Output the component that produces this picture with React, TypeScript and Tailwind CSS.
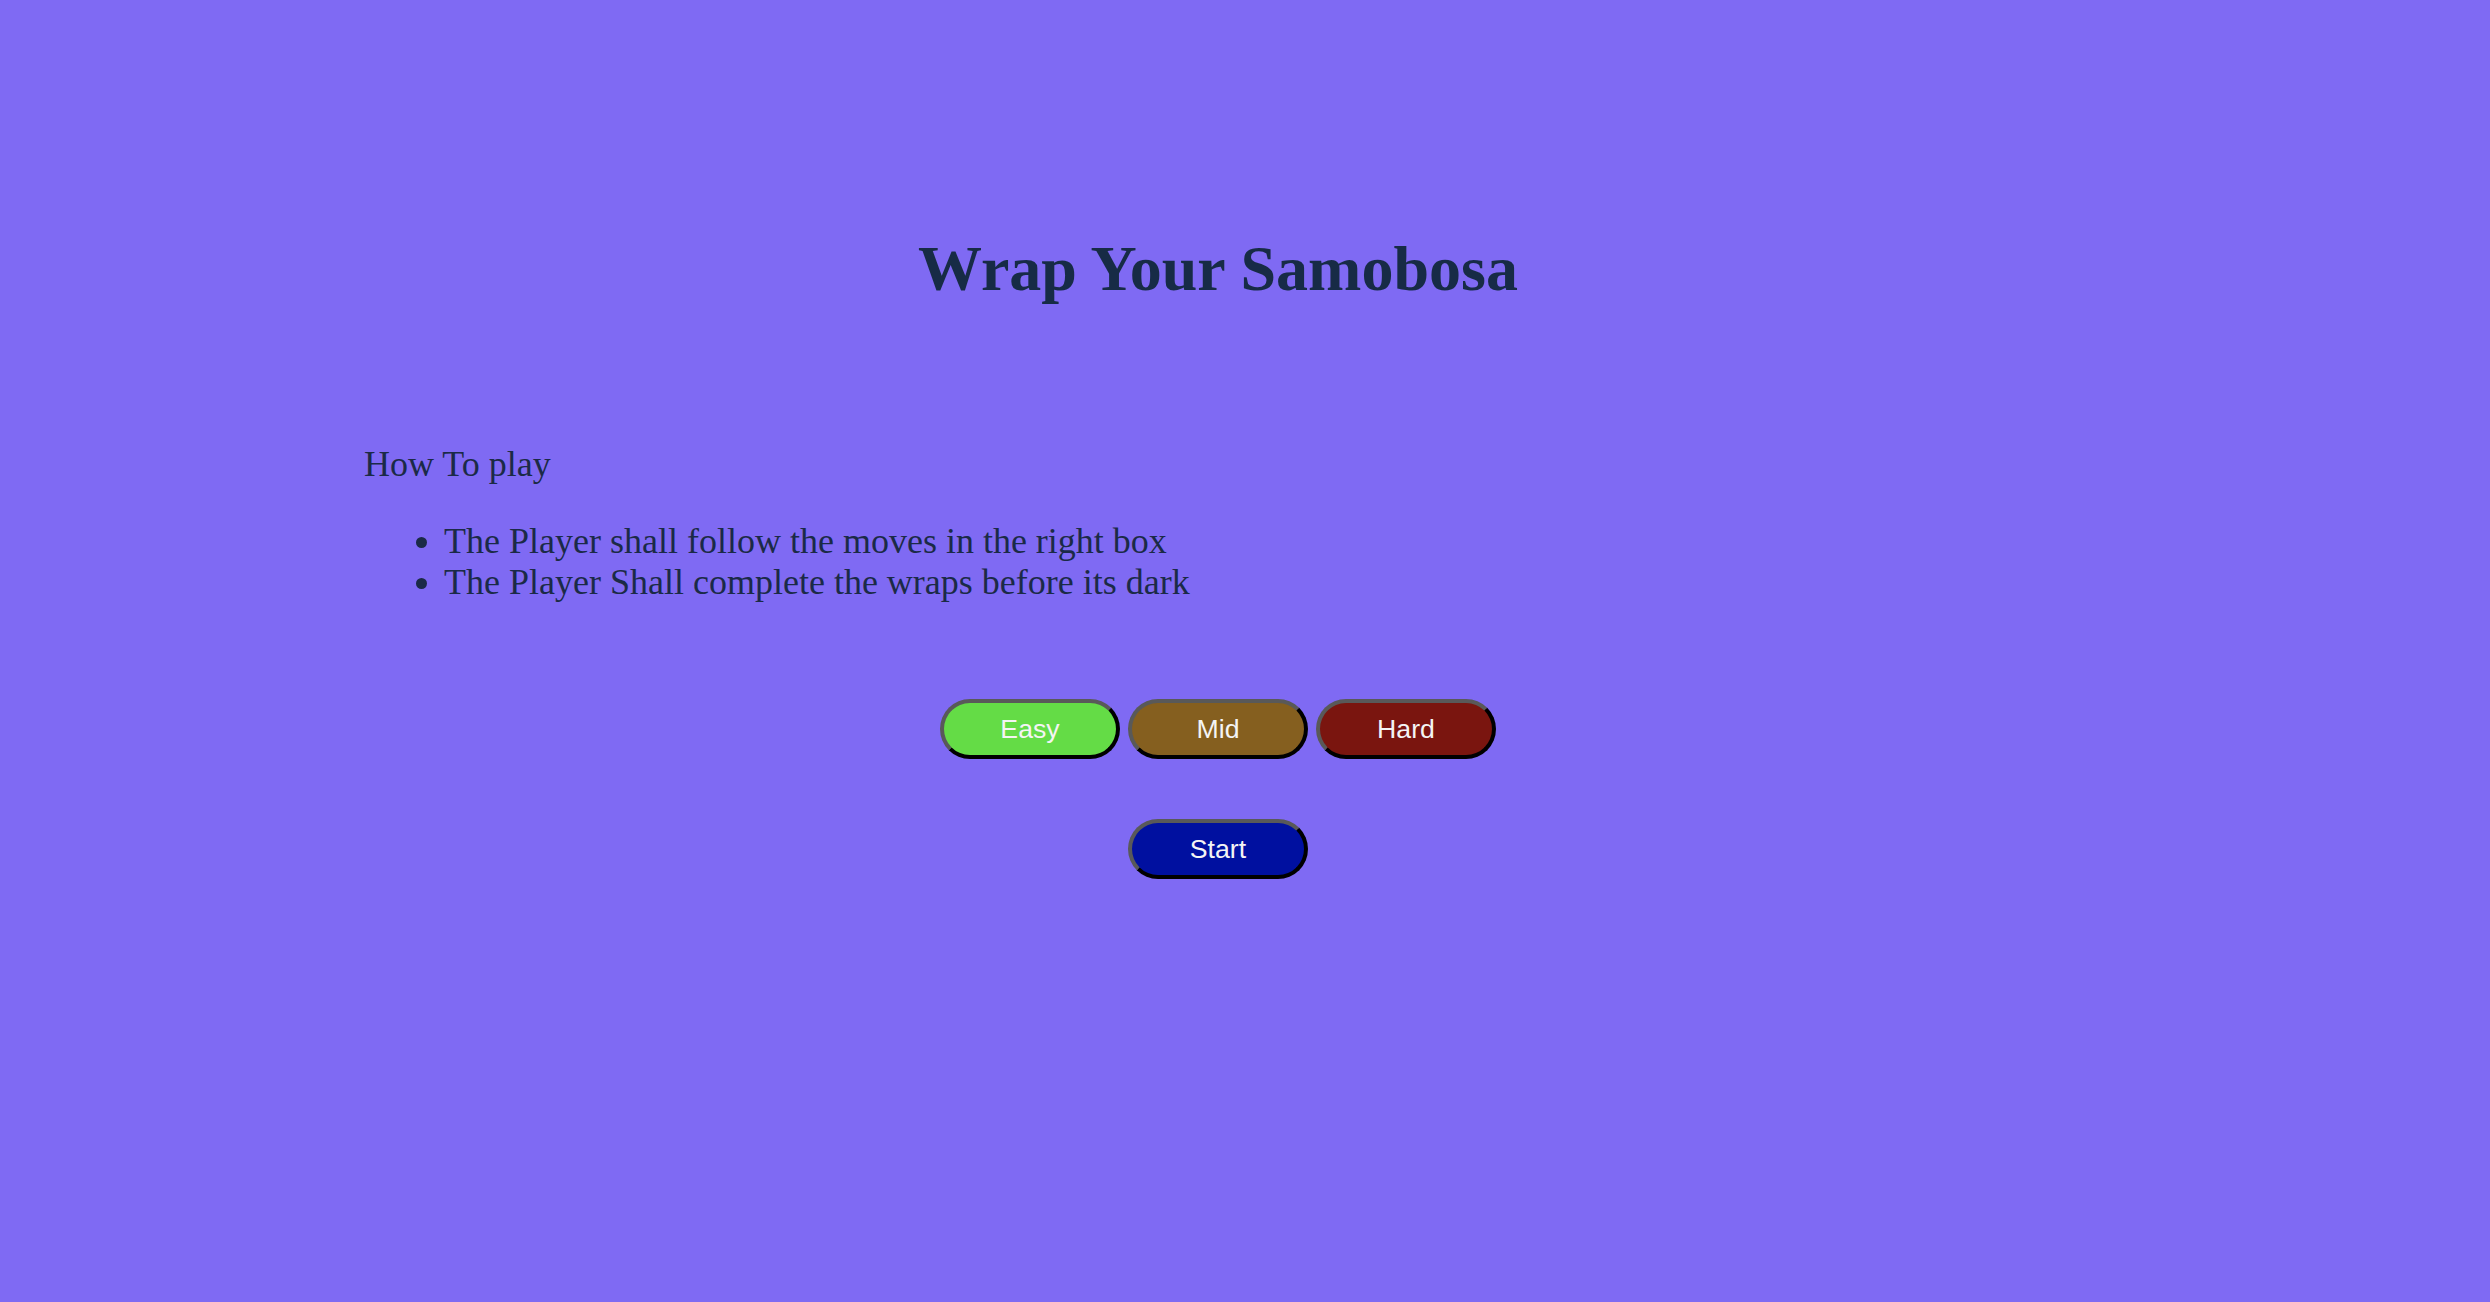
export default function App() {
  const levels = [
    { label: 'Easy', bg: 'bg-[#64dc46]' },
    { label: 'Mid', bg: 'bg-[#855f1f]' },
    { label: 'Hard', bg: 'bg-[#7a150f]' },
  ];

  return (
    <div className="min-h-[1302px] w-full bg-[#7f6af3] text-[#1b2a47] font-['Liberation_Serif',serif]">
      <div className="w-[2436px] pt-[232px]">
        {/* Title */}
        <h1 className="text-center text-[64px] leading-[74px] font-bold text-[#172b46]">
          Wrap Your Samobosa
        </h1>

        {/* How to play */}
        <div className="pl-[364px] mt-[138px] text-[36px] leading-[40px]">
          <p>How To play</p>
          <ul className="list-disc pl-[80px] mt-[37px] leading-[41px]">
            <li>The Player shall follow the moves in the right box</li>
            <li>The Player Shall complete the wraps before its dark</li>
          </ul>
        </div>

        {/* Difficulty buttons */}
        <div className="mt-[96px] flex justify-center gap-[8px]">
          {levels.map((l) => (
            <button
              key={l.label}
              className={`${l.bg} w-[180px] h-[60px] rounded-full border-4 border-t-[#595959] border-l-[#595959] border-r-black border-b-black text-[#f4f4f4] text-[26.67px] font-['Liberation_Sans',sans-serif]`}
            >
              {l.label}
            </button>
          ))}
        </div>

        {/* Start */}
        <div className="mt-[60px] flex justify-center">
          <button className="bg-[#0010a0] w-[180px] h-[60px] rounded-full border-4 border-t-[#595959] border-l-[#595959] border-r-black border-b-black text-[#f4f4f4] text-[26.67px] font-['Liberation_Sans',sans-serif]">
            Start
          </button>
        </div>
      </div>
    </div>
  );
}
